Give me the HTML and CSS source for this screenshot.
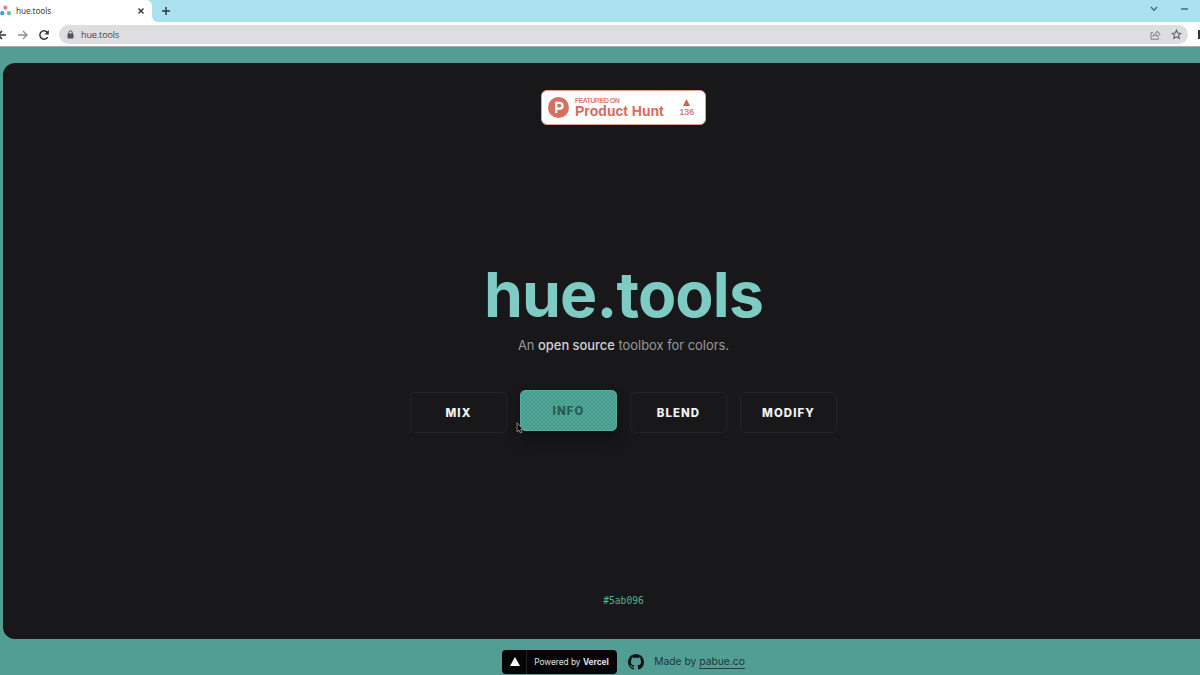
FILE: index.html
```html
<!DOCTYPE html>
<html lang="en">
<head>
<meta charset="utf-8">
<title>hue.tools</title>
<link rel="stylesheet" href="styles.css">
</head>
<body>
<header class="browser">
  <div class="tabstrip">
    <div class="tab">
      <svg class="favicon" width="12" height="12" viewBox="0 0 12 12"><circle cx="5.4" cy="2.7" r="2.1" fill="#e6798b"/><circle cx="2.3" cy="8.2" r="2.1" fill="#35a4cf"/><circle cx="9" cy="8.2" r="2.1" fill="#55c9a2"/></svg>
      <span class="tab-title">hue.tools</span>
      <svg class="tab-close" width="8" height="8" viewBox="0 0 8 8"><path d="M1.5 1.5l5 5M6.5 1.5l-5 5" stroke="#333" stroke-width="1.4"/></svg>
    </div>
    <div class="strip-rest">
      <svg width="10" height="10" viewBox="0 0 10 10"><path d="M5 1v8M1 5h8" stroke="#24404a" stroke-width="1.5"/></svg>
      <div class="window-controls">
        <svg width="8" height="6" viewBox="0 0 8 6"><path d="M1 1l3 3.3L7 1" fill="none" stroke="#36636f" stroke-width="1.2"/></svg>
        <svg width="7" height="6" viewBox="0 0 7 6"><path d="M0 3h7" stroke="#36535c" stroke-width="1.2"/></svg>
      </div>
    </div>
  </div>
  <div class="toolbar">
    <svg class="back" width="7" height="12" viewBox="0 0 7 12"><path d="M6 6H-2M2 2l-4 4 4 4" fill="none" stroke="#333" stroke-width="1.6"/></svg>
    <svg class="forward" width="10" height="12" viewBox="0 0 10 12"><path d="M0 6h9M5 2l4 4-4 4" fill="none" stroke="#8b8b8b" stroke-width="1.3"/></svg>
    <svg class="reload" width="12" height="12" viewBox="0 0 12 12"><path d="M9.7 8.1A4.2 4.2 0 1 1 9.2 3.2" fill="none" stroke="#333" stroke-width="1.5"/><path d="M10.8 1v4.4H6.4z" fill="#333"/></svg>
    <div class="address">
      <svg width="7" height="9" viewBox="0 0 7 9"><rect x=".5" y="3.4" width="6" height="5" rx=".7" fill="#555"/><path d="M1.8 4V2.5a1.7 1.7 0 0 1 3.4 0V4" fill="none" stroke="#555"/></svg>
      <span class="url">hue.tools</span>
      <svg class="share" width="11" height="10" viewBox="0 0 11 10"><path d="M3 2.5H1v6.7h7.5V7.5M3 6.600c.3-2.600 1.600-3.600 4-3.600V1l3.200 3L7 6.800V5C5.300 5 4 5.500 3 6.600z" fill="none" stroke="#777" stroke-width=".9"/></svg>
      <svg width="11" height="11" viewBox="0 0 11 11"><path d="M5.500 1.200l1.250 2.850 3.050.3-2.300 2.050.7 3-2.700-1.600-2.700 1.600.7-3L1.200 4.350l3.050-.3z" fill="none" stroke="#606060" stroke-width="1.100"/></svg>
    </div>
    <div class="extension"></div>
  </div>
</header>
<main class="page">
  <section class="card">
    <div class="hunt">
      <svg width="21" height="21" viewBox="0 0 21 21"><circle cx="10.500" cy="10.500" r="10.500" fill="#d66f5e"/><path d="M8.200 16V5.900h3.500a2.850 2.850 0 0 1 0 5.700H8.200" fill="none" stroke="#fff" stroke-width="2.200"/></svg>
      <div class="hunt-text"><span class="hunt-small">FEATURED ON</span><span class="hunt-name">Product Hunt</span></div>
      <div class="votes"><svg width="7" height="7" viewBox="0 0 7 7"><path d="M3.500 0L7 7H0z" fill="#d3604f"/></svg><span>136</span></div>
    </div>
    <h1 class="title">hue.tools</h1>
    <p class="tagline">An <span class="em">open source</span> toolbox for colors.</p>
    <nav class="tools">
      <a class="tool">MIX</a>
      <a class="tool active">INFO</a>
      <a class="tool">BLEND</a>
      <a class="tool">MODIFY</a>
    </nav>
    <span class="hex">#5ab096</span>
  </section>
  <footer class="footer">
    <div class="vercel">
      <div class="vercel-mark"><svg width="10" height="9" viewBox="0 0 10 9"><path d="M5 0l5 9H0z" fill="#fff"/></svg></div>
      <span class="vercel-text">Powered by <b>Vercel</b></span>
    </div>
    <svg class="github" width="16" height="16" viewBox="0 0 16 16"><path fill="#101716" d="M8 0C3.580 0 0 3.580 0 8c0 3.540 2.290 6.530 5.470 7.590.4.070.55-.17.55-.38 0-.19-.01-.82-.01-1.490-2.010.37-2.530-.49-2.690-.94-.09-.23-.48-.94-.82-1.130-.28-.15-.68-.52-.01-.53.63-.01 1.080.58 1.230.82.72 1.210 1.870.87 2.330.66.07-.52.28-.87.51-1.070-1.780-.2-3.640-.89-3.640-3.950 0-.87.31-1.590.82-2.150-.08-.2-.36-1.020.08-2.120 0 0 .67-.21 2.200.82.64-.18 1.320-.27 2-.27s1.360.09 2 .27c1.530-1.040 2.200-.82 2.200-.82.44 1.100.16 1.920.08 2.120.51.56.82 1.270.82 2.150 0 3.070-1.870 3.750-3.650 3.950.29.25.54.73.54 1.480 0 1.070-.01 1.930-.01 2.200 0 .21.15.46.55.38A8.010 8.010 0 0 0 16 8c0-4.420-3.580-8-8-8z"/></svg>
    <span class="made">Made by <a class="author">pabue.co</a></span>
  </footer>
</main>
<svg class="cursor" width="8" height="12" viewBox="0 0 8 12"><path d="M1 .8v9l2-1.800 1.300 3 1.600-.7-1.300-2.900H7z" fill="#080808" stroke="#a0a0a0" stroke-width=".8"/></svg>
</body>
</html>
```

FILE: styles.css
```css
* { box-sizing: border-box; }
body { margin: 0; width: 1200px; height: 675px; overflow: hidden; background: #539e94; font-family: Inter, "Liberation Sans", sans-serif; }
svg { display: block; flex: none; }
.browser { height: 47px; background: #fff; border-bottom: 1px solid #a5aaa9; }
.tabstrip { display: flex; height: 22px; background: linear-gradient(90deg, #a9e1ef 152px, #fff 152px); }
.tab { width: 152px; display: flex; align-items: center; background: #fff; border-top-right-radius: 6px; }
.tab-title { font: 8.300px/12px "Noto Sans", sans-serif; color: #444; margin-left: 4px; width: 121px; letter-spacing: -.15px; }
.tab-close { margin-right: 6px; }
.strip-rest { flex: 1; display: flex; align-items: center; justify-content: space-between; padding: 0 12px 0 9px; background: #a9e1ef; border-bottom-left-radius: 6px; }
.window-controls { display: flex; gap: 23px; padding-bottom: 4px; }
.toolbar { display: flex; align-items: center; height: 24px; padding-top: 1px; }
.forward { margin-left: 11px; }
.reload { margin-left: 10px; }
.address { width: 1129px; height: 19px; margin-left: 9px; border-radius: 10px; background: #dedddf; display: flex; align-items: center; padding: 0 6px 0 8px; }
.url { font: 9px/14px "Open Sans", sans-serif; color: #444; margin-left: 7px; letter-spacing: -.1px; }
.share { margin: 0 10px 0 auto; }
.extension { width: 2px; height: 9px; margin-left: 10px; background: #333; }
.page { width: 1241px; margin: 16px 0 0 3px; }
.card { height: 576px; padding-top: 27px; background: #18181a; border-radius: 12px; display: flex; flex-direction: column; align-items: center; }
.hunt { width: 165px; height: 35px; padding: 0 11px 0 6px; background: #fff; border: 1px solid #e2a094; border-radius: 6px; display: flex; align-items: center; color: #d66a5a; font-family: "Liberation Sans", Arial, sans-serif; }
.hunt-text { display: flex; flex-direction: column; margin-left: 6px; white-space: nowrap; }
.hunt-small { font-size: 6.600px; line-height: 7px; font-weight: 400; letter-spacing: -.2px; -webkit-text-stroke: .2px; }
.hunt-name { font-size: 14px; line-height: 14px; font-weight: 700; }
.votes { display: flex; flex-direction: column; align-items: center; margin-left: auto; gap: 2px; font-size: 8.700px; line-height: 9px; -webkit-text-stroke: .2px; }
.title { margin: 134px 0 0; font-size: 62.500px; line-height: 70px; font-weight: 700; letter-spacing: -.85px; color: #7dcbc2; }
.tagline { margin: 7px 0 0; font-size: 12.900px; line-height: 20px; color: #98989a; }
.em { color: #d2d2d3; font-weight: 500; }
.tools { display: flex; gap: 13px; margin-top: 36px; }
.tool { width: 97px; height: 41px; border: 1px solid #232325; border-radius: 5px; display: flex; align-items: center; justify-content: center; font: 800 11.400px/16px Inter, sans-serif; letter-spacing: 1.100px; color: #f2f2f2; }
.active { margin-top: -2px; background: repeating-conic-gradient(#47998a 0 25%, #51a999 0 50%) 0 0 / 4px 4px; border-color: #55ad9f; color: #285c54; box-shadow: 0 8px 12px #101012; }
.hex { margin-top: 162px; font: 9.600px/12px "DejaVu Sans Mono", monospace; color: #4fb28f; }
.footer { height: 45px; display: flex; align-items: center; justify-content: center; }
.vercel { width: 115px; height: 24px; display: flex; align-items: center; background: #050505; border-radius: 4px; }
.vercel-mark { width: 25px; height: 24px; padding-left: 8px; border-right: 1px solid #252525; display: flex; align-items: center; }
.vercel-text { margin-left: 7px; color: #e2e2e2; font-size: 8.300px; white-space: nowrap; }
.github { margin-left: 11px; }
.made { margin-left: 10px; font-size: 10.300px; line-height: 13px; color: #1b3835; }
.author { display: inline-block; border-bottom: 1px solid #20413d; }
.cursor { position: absolute; left: 516px; top: 422px; }
```
